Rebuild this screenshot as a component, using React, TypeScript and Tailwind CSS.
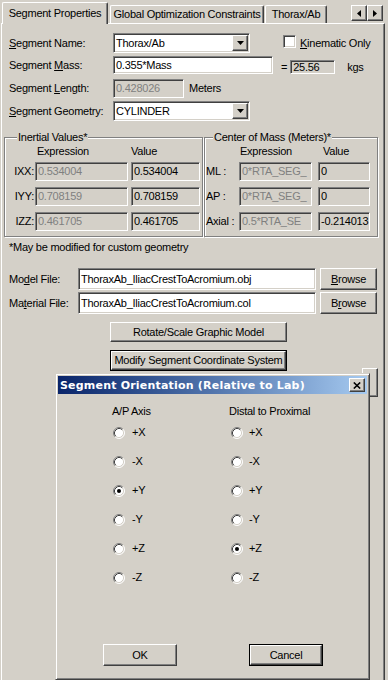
import React from "react";

const sunken =
  "border border-t-[#808080] border-l-[#808080] border-b-white border-r-white shadow-[inset_1px_1px_0_#404040,inset_-1px_-1px_0_#d4d0c8]";
const raised =
  "border border-t-white border-l-white border-b-[#404040] border-r-[#404040] shadow-[inset_-1px_-1px_0_#808080]";
const etched = "border border-[#808080] shadow-[inset_1px_1px_0_#fff,1px_1px_0_#fff]";

function Box({ text, className = "", white = false, dim = false }: { text: string; className?: string; white?: boolean; dim?: boolean }) {
  return (
    <div
      className={`${sunken} ${white ? "bg-white" : "bg-[#d4d0c8]"} ${dim ? "text-[#808080]" : "text-black"} flex items-center pl-[2px] overflow-hidden whitespace-nowrap ${className}`}
    >
      {text}
    </div>
  );
}

function Combo({ value }: { value: string }) {
  return (
    <div className={`${sunken} bg-white w-[137px] h-[20px] p-[1px] flex`}>
      <div className="flex-1 flex items-center pl-[1px]">{value}</div>
      <div className={`${raised} bg-[#d4d0c8] w-[16px] flex items-center justify-center`}>
        <svg width="7" height="4" viewBox="0 0 7 4">
          <path d="M0 0h7L3.5 4z" fill="#000" />
        </svg>
      </div>
    </div>
  );
}

function Btn({ children, className = "", isDefault = false }: { children: React.ReactNode; className?: string; isDefault?: boolean }) {
  if (isDefault) {
    return (
      <div className={`border border-black ${className}`}>
        <div className={`${raised} bg-[#d4d0c8] w-full h-full flex items-center justify-center`}>{children}</div>
      </div>
    );
  }
  return <div className={`${raised} bg-[#d4d0c8] flex items-center justify-center ${className}`}>{children}</div>;
}

function Radio({ checked = false }: { checked?: boolean }) {
  return (
    <svg width="12" height="12" viewBox="0 0 12 12" className="shrink-0">
      <circle cx="6" cy="6" r="5" fill="#fff" />
      <path d="M2.11 9.89A5.5 5.5 0 0 1 9.89 2.11" fill="none" stroke="#808080" />
      <path d="M9.89 2.11A5.5 5.5 0 0 1 2.11 9.89" fill="none" stroke="#fff" />
      <path d="M2.82 9.18A4.5 4.5 0 0 1 9.18 2.82" fill="none" stroke="#404040" />
      <path d="M9.18 2.82A4.5 4.5 0 0 1 2.82 9.18" fill="none" stroke="#d4d0c8" />
      {checked && <circle cx="6" cy="6" r="2" fill="#000" />}
    </svg>
  );
}

const axes = ["+X", "-X", "+Y", "-Y", "+Z", "-Z"];

export default function App() {
  return (
    <div className="relative w-[388px] h-[680px] overflow-hidden bg-[#d4d0c8] text-black text-[11px] leading-[13px] tracking-[-0.25px] font-['Liberation_Sans',Arial,sans-serif]">
      {/* Tabs */}
      <div className="flex items-end h-[23px] pl-[2px] pr-[5px]">
        <div className="relative z-10 -mb-px h-[22px] w-[106px] flex items-center justify-center bg-[#d4d0c8] border-t border-l border-r border-t-white border-l-white border-r-[#404040] shadow-[inset_-1px_0_0_#808080] rounded-t-[2px]">
          Segment Properties
        </div>
        <div className="ml-[2px] h-[18px] w-[154px] flex items-center justify-center border-t border-l border-r border-t-white border-l-white border-r-[#404040] shadow-[inset_-1px_0_0_#808080] rounded-t-[2px]">
          Global Optimization Constraints
        </div>
        <div className="ml-px h-[18px] w-[62px] flex items-center justify-center border-t border-l border-r border-t-white border-l-white border-r-[#404040] shadow-[inset_-1px_0_0_#808080] rounded-t-[2px]">
          Thorax/Ab
        </div>
        <div className="ml-auto self-start mt-[5px] flex">
          <div className={`${raised} w-[16px] h-[16px] flex items-center justify-center`}>
            <svg width="4" height="7" viewBox="0 0 4 7">
              <path d="M4 0v7L0 3.5z" fill="#000" />
            </svg>
          </div>
          <div className={`${raised} w-[16px] h-[16px] flex items-center justify-center`}>
            <svg width="4" height="7" viewBox="0 0 4 7">
              <path d="M0 0v7l4-3.5z" fill="#000" />
            </svg>
          </div>
        </div>
      </div>

      {/* Tab panel */}
      <div className="ml-px w-[384px] h-[657px] border-t border-l border-r border-t-white border-l-white border-r-[#404040] shadow-[inset_-1px_0_0_#808080]">
        <div className="mt-[9px] flex items-center h-[20px] pl-[7px]">
          <span className="w-[104px]">
            <u>S</u>egment Name:
          </span>
          <Combo value="Thorax/Ab" />
          <div className={`${sunken} bg-white w-[13px] h-[13px] ml-[33px] self-start mt-[2px]`} />
          <span className="ml-[4px]">
            <u>K</u>inematic Only
          </span>
        </div>

        <div className="mt-[3px] flex items-center h-[18px] pl-[7px]">
          <span className="w-[104px]">
            Segment <u>M</u>ass:
          </span>
          <Box text="0.355*Mass" white className="w-[160px] h-[18px]" />
          <span className="ml-[8px] pt-[5px]">=</span>
          <Box text="25.56" className="ml-[3px] w-[45px] h-[14px] self-start mt-[4px]" />
          <span className="ml-[12px] pt-[5px]">kgs</span>
        </div>

        <div className="mt-[5px] flex items-center h-[19px] pl-[7px]">
          <span className="w-[104px]">
            Segment <u>L</u>ength:
          </span>
          <Box text="0.428026" dim className="w-[71px] h-[19px]" />
          <span className="ml-[5px]">Meters</span>
        </div>

        <div className="mt-[3px] flex items-center h-[20px] pl-[7px]">
          <span className="w-[104px]">
            <u>S</u>egment Geometry:
          </span>
          <Combo value="CYLINDER" />
        </div>

        {/* Group boxes */}
        <div className="mt-[16px] flex pl-[2px]">
          <div className={`relative ${etched} w-[199px] h-[100px] pt-[7px]`}>
            <span className="absolute left-[12px] -top-[7px] px-[1px] bg-[#d4d0c8]">Inertial Values*</span>
            <div className="flex h-[13px]">
              <span className="ml-[32px] w-[96px]">Expression</span>
              <span className="ml-[-2px]">Value</span>
            </div>
            {[
              ["IXX:", "0.534004"],
              ["IYY:", "0.708159"],
              ["IZZ:", "0.461705"],
            ].map(([l, v], i) => (
              <div key={l} className={`flex items-center h-[19px] ${i === 0 ? "mt-[4px]" : "mt-[6px]"}`}>
                <span className="w-[30px] text-right pr-[1px]">{l}</span>
                <Box text={v} dim className="w-[93px] h-[19px]" />
                <Box text={v} className="ml-[3px] w-[69px] h-[19px]" />
              </div>
            ))}
          </div>

          <div className={`relative ${etched} ml-px w-[174px] h-[100px] pt-[7px]`}>
            <span className="absolute left-[8px] -top-[7px] px-[1px] bg-[#d4d0c8]">Center of Mass (Meters)*</span>
            <div className="flex h-[13px]">
              <span className="ml-[35px] w-[79px]">Expression</span>
              <span className="ml-[4px]">Value</span>
            </div>
            {[
              ["ML :", "0*RTA_SEG_", "0"],
              ["AP :", "0*RTA_SEG_", "0"],
              ["Axial :", "0.5*RTA_SE", "-0.214013"],
            ].map(([l, e, v], i) => (
              <div key={l} className={`flex items-center h-[19px] ${i === 0 ? "mt-[4px]" : "mt-[6px]"}`}>
                <span className="w-[34px] pl-[1px] whitespace-nowrap">{l}</span>
                <Box text={e} dim className="w-[73px] h-[19px]" />
                <Box text={v} className="ml-[6px] w-[52px] h-[19px] pl-[1px]" />
              </div>
            ))}
          </div>
        </div>

        <div className="mt-[4px] pl-[7px]">*May be modified for custom geometry</div>

        <div className="mt-[14px] flex items-center h-[22px] pl-[7px]">
          <span className="w-[69px]">
            Mo<u>d</u>el File:
          </span>
          <Box text="ThoraxAb_IliacCrestToAcromium.obj" white className="w-[238px] h-[22px]" />
          <Btn className="ml-[4px] w-[57px] h-[22px]">
            <span>
              <u>B</u>rowse
            </span>
          </Btn>
        </div>
        <div className="mt-[2px] flex items-center h-[22px] pl-[7px]">
          <span className="w-[69px]">
            Ma<u>t</u>erial File:
          </span>
          <Box text="ThoraxAb_IliacCrestToAcromium.col" white className="w-[238px] h-[22px]" />
          <Btn className="ml-[4px] w-[57px] h-[22px]">
            <span>
              B<u>r</u>owse
            </span>
          </Btn>
        </div>

        <Btn className="mt-[8px] ml-[108px] w-[177px] h-[20px]">Rotate/Scale Graphic Model</Btn>
        <Btn isDefault className="mt-[8px] ml-[108px] w-[177px] h-[21px]">
          Modify Segment Coordinate System
        </Btn>
      </div>

      {/* control partly hidden behind the dialog */}
      <div className={`absolute z-10 left-[362px] top-[368px] w-[16px] h-[29px] bg-[#d4d0c8] ${raised}`} />

      {/* Dialog */}
      <div className="absolute z-20 left-[55px] top-[373px] w-[315px] h-[307px] bg-[#d4d0c8] p-[2px] border border-t-[#d4d0c8] border-l-[#d4d0c8] border-b-[#404040] border-r-[#404040] shadow-[inset_1px_1px_0_#fff,inset_-1px_-1px_0_#808080]">
        <div className="h-[18px] flex items-center pl-[2px] pr-[2px] bg-gradient-to-r from-[#0a246a] to-[#a6caf0]">
          <span className="text-white font-bold font-['DejaVu_Sans',Verdana,sans-serif] text-[11px] tracking-[0.2px] whitespace-nowrap">
            Segment Orientation (Relative to Lab)
          </span>
          <div className={`${raised} ml-auto w-[16px] h-[14px] bg-[#d4d0c8] flex items-center justify-center`}>
            <svg width="8" height="7" viewBox="0 0 8 7">
              <path d="M0.8 0.5L7.2 6.5M7.2 0.5L0.8 6.5" stroke="#000" strokeWidth="1.6" />
            </svg>
          </div>
        </div>

        <div className="flex pl-[54px] pt-[11px]">
          <div className="w-[117px]">
            <div className="h-[13px]">A/P Axis</div>
            {axes.map((a) => (
              <div key={a} className="h-[29px] flex items-center pl-[1px]">
                <Radio checked={a === "+Y"} />
                <span className="ml-[7px]">{a}</span>
              </div>
            ))}
          </div>
          <div>
            <div className="h-[13px]">Distal to Proximal</div>
            {axes.map((a) => (
              <div key={a} className="h-[29px] flex items-center pl-[2px]">
                <Radio checked={a === "+Z"} />
                <span className="ml-[6px]">{a}</span>
              </div>
            ))}
          </div>
        </div>

        <div className="mt-[52px] flex pl-[45px]">
          <Btn className="w-[74px] h-[22px]">OK</Btn>
          <Btn isDefault className="ml-[72px] w-[74px] h-[22px]">
            Cancel
          </Btn>
        </div>
      </div>
    </div>
  );
}
